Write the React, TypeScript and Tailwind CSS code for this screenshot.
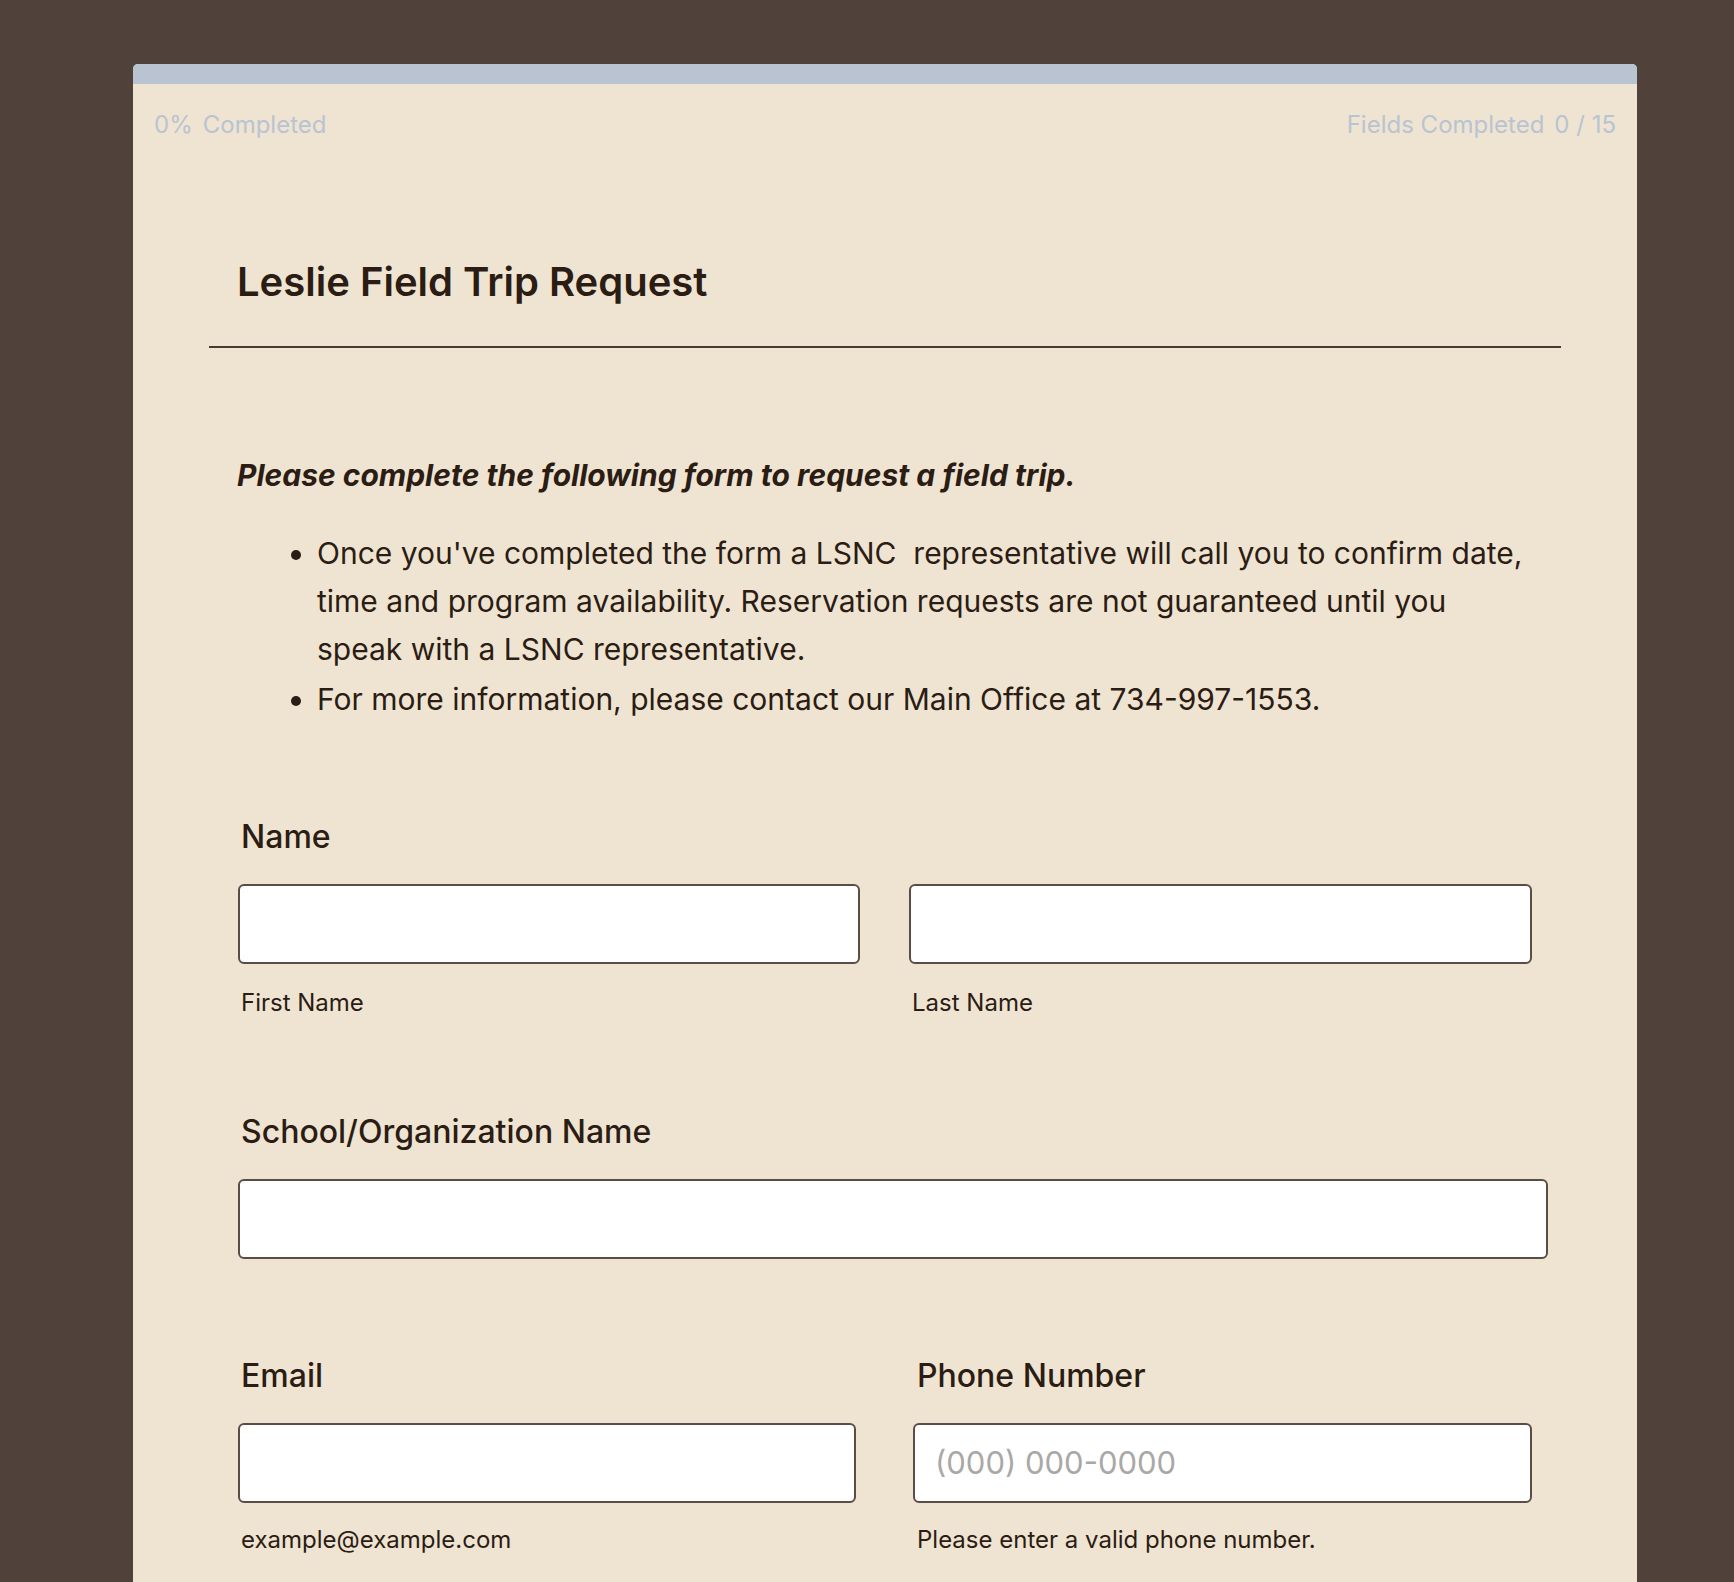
import React from "react";

const font = { fontFamily: "Inter, 'Noto Sans', sans-serif" };

function Input({ w, placeholder }: { w: string; placeholder?: string }) {
  return (
    <div
      className={`${w} h-[80px] bg-white border-2 border-[#5b4d45] rounded-[6px] flex items-center px-[20px]`}
    >
      {placeholder ? (
        <span className="text-[31px] text-[#aaa8a6]">{placeholder}</span>
      ) : null}
    </div>
  );
}

export default function App() {
  return (
    <div className="min-h-screen bg-[#50423b] pt-[64px] pl-[133px] overflow-hidden" style={font}>
      <div className="w-[1504px] min-h-[1560px] bg-[#efe4d2] rounded-t-[5px] overflow-hidden text-[#2b1c14]">
        <div className="h-[20px] bg-[#b9c3d1]" />
        <div className="h-[82px] flex items-center justify-between px-[21px] text-[24px] text-[#b9c3d1]">
          <div className="flex gap-[10px]">
            <span>0%</span>
            <span>Completed</span>
          </div>
          <div className="flex gap-[10px]">
            <span>Fields Completed</span>
            <span>0 / 15</span>
          </div>
        </div>

        <div className="mx-[76px] pt-[94px] pb-[42px] border-b-2 border-[#4a3b32]">
          <h1 className="pl-[28px] text-[40px] leading-[44px] font-semibold">
            Leslie Field Trip Request
          </h1>
        </div>

        <div className="pl-[104px] pr-[89px]">
          <p className="mt-[109px] text-[30px] leading-[36px] font-bold italic">
            Please complete the following form to request a field trip.
          </p>
          <ul className="mt-[36px] pl-[80px] pr-[18px] list-disc text-[30px] leading-[48px]">
            <li>
              Once you've completed the form a LSNC&nbsp; representative will call you to confirm date,
              time and program availability. Reservation requests are not guaranteed until you speak with a
              LSNC representative.
            </li>
            <li className="mt-[2px]">
              For more information, please contact our Main Office at 734-997-1553.
            </li>
          </ul>

          <div className="mt-[94px] pl-[1px]">
            <div className="pl-[3px] text-[32px] leading-[40px] font-medium">Name</div>
            <div className="mt-[27px] flex gap-[49px]">
              <div className="w-[622px]">
                <Input w="w-[622px]" />
                <div className="mt-[24px] pl-[3px] text-[24px] leading-[30px]">First Name</div>
              </div>
              <div className="w-[623px]">
                <Input w="w-[623px]" />
                <div className="mt-[24px] pl-[3px] text-[24px] leading-[30px]">Last Name</div>
              </div>
            </div>
          </div>

          <div className="mt-[94px] pl-[1px]">
            <div className="pl-[3px] text-[32px] leading-[40px] font-medium">School/Organization Name</div>
            <div className="mt-[27px]">
              <Input w="w-[1310px]" />
            </div>
          </div>

          <div className="mt-[97px] pl-[1px] flex gap-[57px]">
            <div className="w-[618px]">
              <div className="pl-[3px] text-[32px] leading-[40px] font-medium">Email</div>
              <div className="mt-[27px]">
                <Input w="w-[618px]" />
              </div>
              <div className="mt-[22px] pl-[3px] text-[24px] leading-[30px]">example@example.com</div>
            </div>
            <div className="w-[619px]">
              <div className="pl-[4px] text-[32px] leading-[40px] font-medium">Phone Number</div>
              <div className="mt-[27px]">
                <Input w="w-[619px]" placeholder="(000) 000-0000" />
              </div>
              <div className="mt-[22px] pl-[4px] text-[24px] leading-[30px]">Please enter a valid phone number.</div>
            </div>
          </div>
        </div>
      </div>
    </div>
  );
}
